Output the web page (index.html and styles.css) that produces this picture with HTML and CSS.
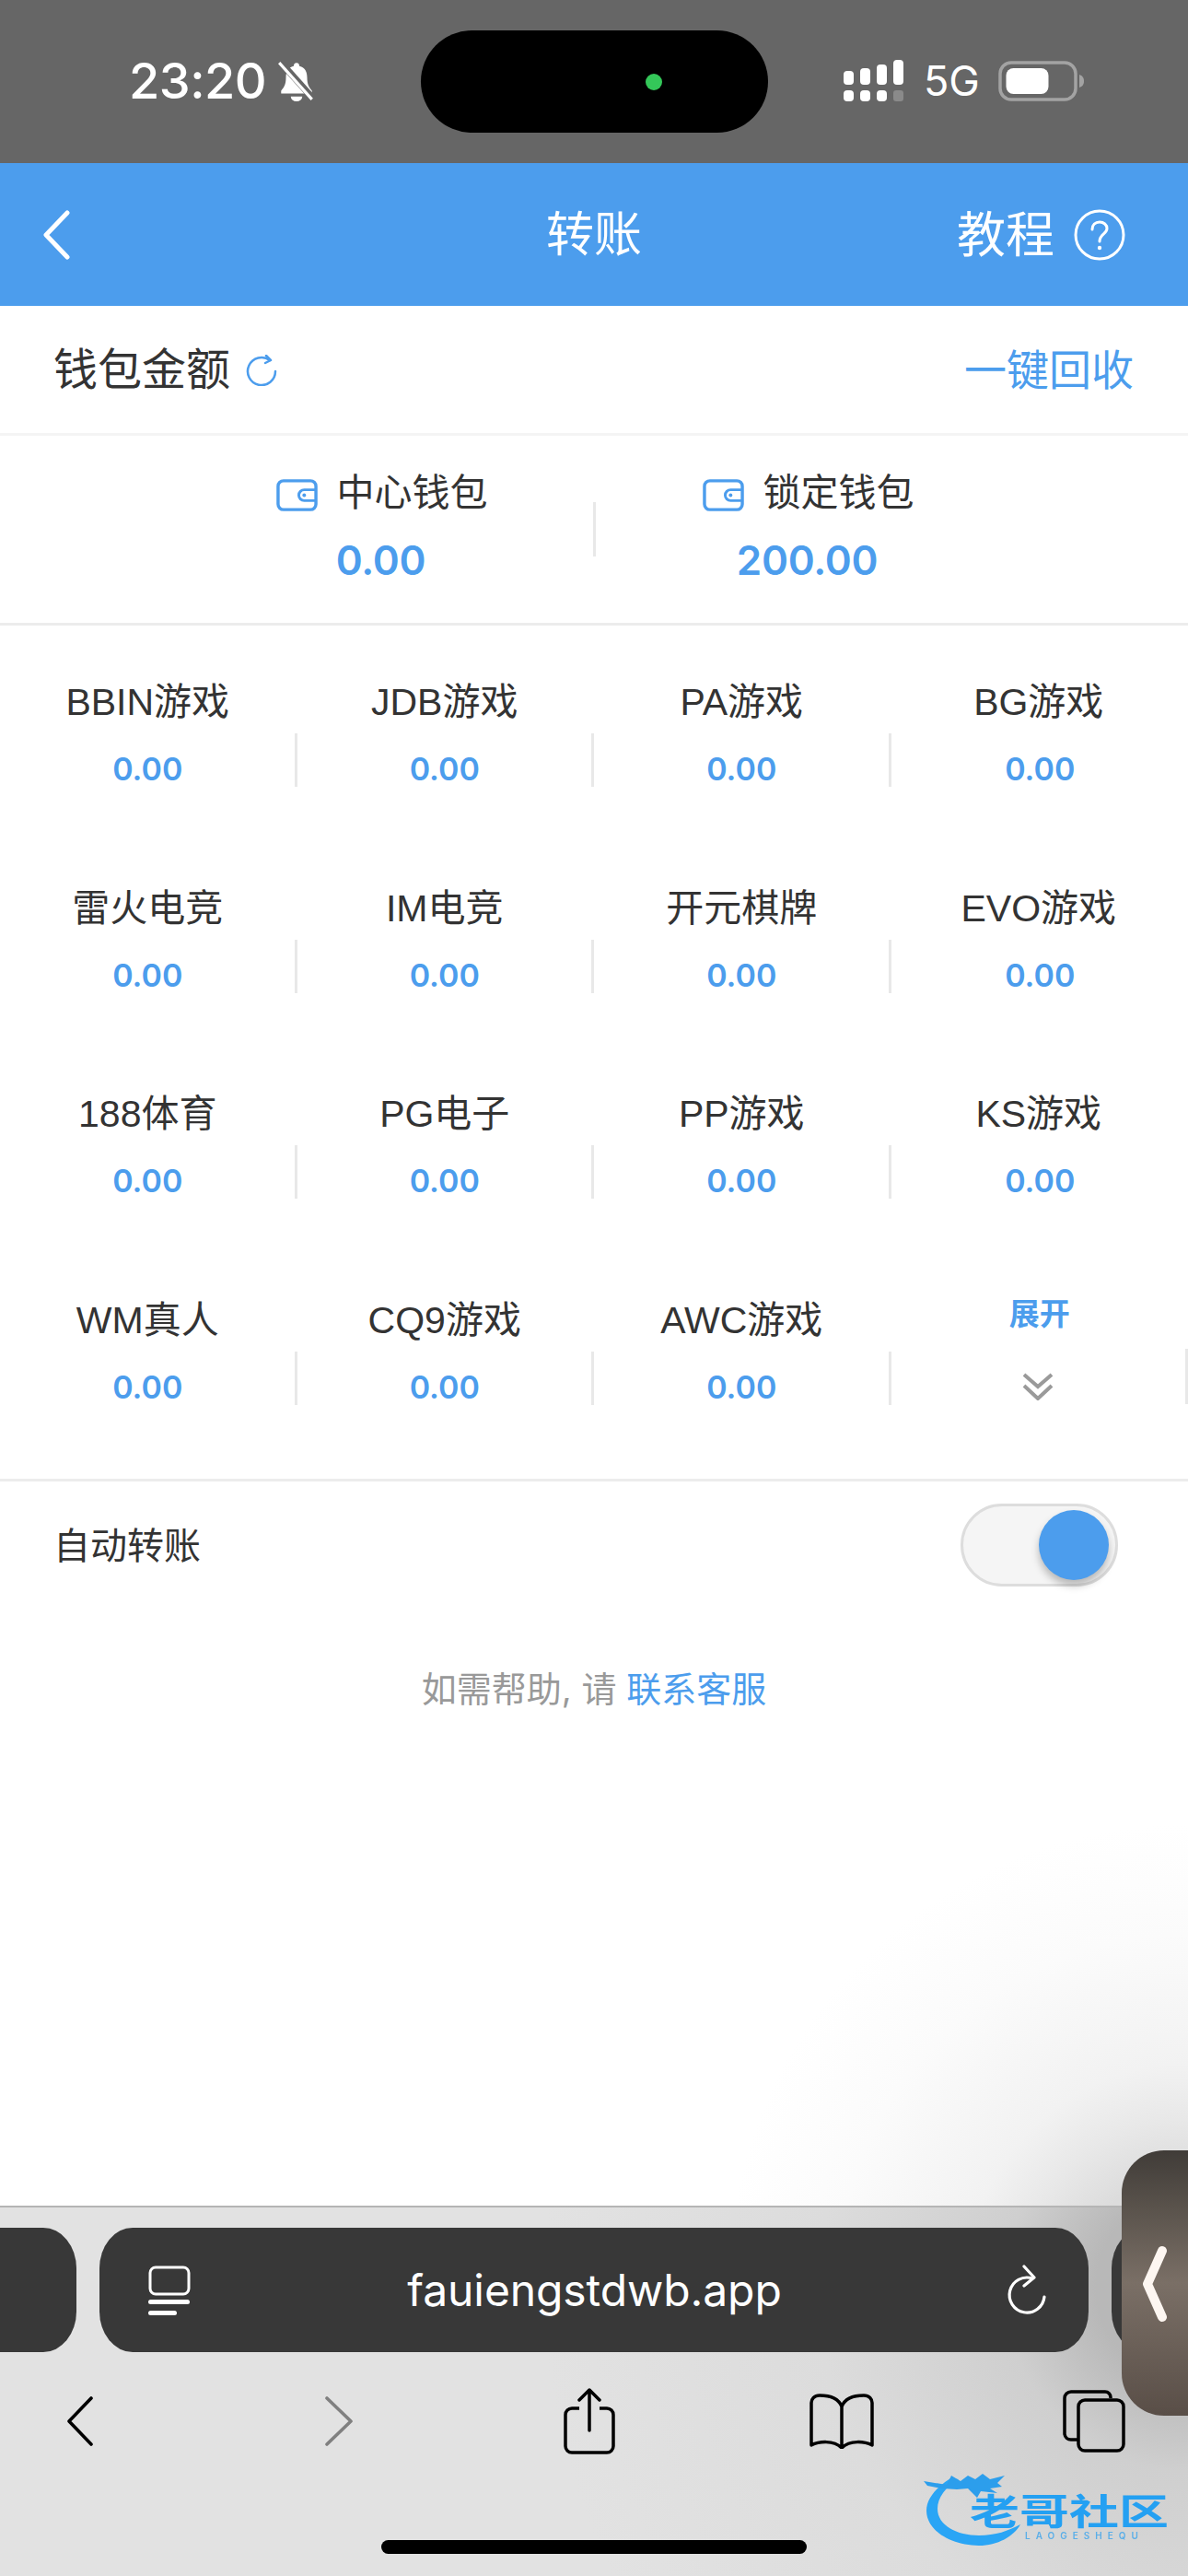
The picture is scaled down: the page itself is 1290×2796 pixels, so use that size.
FILE: index.html
```html
<!DOCTYPE html>
<html lang="zh-CN">
<head>
<meta charset="utf-8">
<title>转账</title>
<link rel="stylesheet" href="styles.css">
</head>
<body>
<div class="screen">
  <header class="status">
    <div class="status-left">
      <span class="clock">23:20</span>
      <svg class="bell" viewBox="0 0 44 44"><path d="M22 3c2 0 3 1.500 3 3.500 6 1.500 8 6 8 12 0 7 2 10 5 13.500v3H6v-3c3-3.500 5-6.500 5-13.500 0-6 2-10.500 8-12C19 4.500 20 3 22 3z" fill="#fff"/><path d="M16 38a6 5 0 0 0 12 0z" fill="#fff"/><path d="M6 3l34 38" stroke="#666" stroke-width="7"/><path d="M4 3l34 38" stroke="#fff" stroke-width="3"/></svg>
    </div>
    <div class="island"><span class="cam"></span></div>
    <div class="status-right">
      <svg class="signal" viewBox="0 0 66 46"><g fill="#fff"><rect x="0" y="12" width="11" height="15" rx="4"/><rect x="18" y="9" width="11" height="18" rx="4"/><rect x="36" y="5" width="11" height="22" rx="4"/><rect x="54" y="0" width="11" height="27" rx="4"/><rect x="0" y="33" width="11" height="12" rx="4"/><rect x="18" y="33" width="11" height="12" rx="4"/><rect x="36" y="33" width="11" height="12" rx="4"/></g><rect x="54" y="33" width="11" height="12" rx="3" fill="#8a8a8a"/></svg>
      <span class="net">5G</span>
      <svg class="battery" viewBox="0 0 94 44"><rect x="2" y="2" width="82" height="40" rx="12" fill="none" stroke="#a3a3a3" stroke-width="3.500"/><rect x="8.500" y="8" width="46" height="28" rx="8" fill="#fff"/><path d="M88 15c3 1 5 3 5 7s-2 6-5 7z" fill="#a3a3a3"/></svg>
    </div>
  </header>

  <nav class="nav">
    <svg class="nav-back" viewBox="0 0 32 54"><path d="M28 3L5 27l23 24" fill="none" stroke="#fff" stroke-width="5" stroke-linecap="round" stroke-linejoin="round"/></svg>
    <h1 class="nav-title">转账</h1>
    <div class="nav-help">
      <span>教程</span>
      <svg class="help-icon" viewBox="0 0 56 56"><circle cx="28" cy="28" r="26" fill="none" stroke="#fff" stroke-width="3"/><path d="M20 22c0-5 3.500-8 8-8s8 3 8 7c0 6-8 6-8 14" fill="none" stroke="#fff" stroke-width="3" stroke-linecap="round"/><circle cx="28" cy="42" r="2.200" fill="#fff"/></svg>
    </div>
  </nav>

  <section class="wallet-head">
    <div class="wallet-title">
      <span>钱包金额</span>
      <svg class="refresh" viewBox="0 0 36 34"><path d="M27 6A15 15 0 1 0 33 18" fill="none" stroke="#4c9ded" stroke-width="2.500" stroke-linecap="round"/><path d="M23 1l5 5-6 3" fill="none" stroke="#4c9ded" stroke-width="2.500" stroke-linecap="round" stroke-linejoin="round"/></svg>
    </div>
    <span class="recycle">一键回收</span>
  </section>

  <section class="cards">
    <div class="card">
      <div class="card-label">
        <svg class="wallet-icon" viewBox="0 0 46 36"><rect x="2" y="2" width="42" height="32" rx="6" fill="none" stroke="#4c9ded" stroke-width="3.500"/><path d="M44 12H31a6 6 0 0 0 0 12h13" fill="none" stroke="#4c9ded" stroke-width="3"/><circle cx="31" cy="18" r="2" fill="#4c9ded"/></svg>
        <span>中心钱包</span>
      </div>
      <div class="card-value">0.00</div>
    </div>
    <span class="card-rule"></span>
    <div class="card">
      <div class="card-label">
        <svg class="wallet-icon" viewBox="0 0 46 36"><rect x="2" y="2" width="42" height="32" rx="6" fill="none" stroke="#4c9ded" stroke-width="3.500"/><path d="M44 12H31a6 6 0 0 0 0 12h13" fill="none" stroke="#4c9ded" stroke-width="3"/><circle cx="31" cy="18" r="2" fill="#4c9ded"/></svg>
        <span>锁定钱包</span>
      </div>
      <div class="card-value">200.00</div>
    </div>
  </section>

  <section class="games">
    <div class="game"><div class="game-name">BBIN游戏</div><div class="game-val">0.00</div></div>
    <div class="game"><div class="game-name">JDB游戏</div><div class="game-val">0.00</div></div>
    <div class="game"><div class="game-name">PA游戏</div><div class="game-val">0.00</div></div>
    <div class="game"><div class="game-name">BG游戏</div><div class="game-val no-rule">0.00</div></div>
    <div class="game"><div class="game-name">雷火电竞</div><div class="game-val">0.00</div></div>
    <div class="game"><div class="game-name">IM电竞</div><div class="game-val">0.00</div></div>
    <div class="game"><div class="game-name">开元棋牌</div><div class="game-val">0.00</div></div>
    <div class="game"><div class="game-name">EVO游戏</div><div class="game-val no-rule">0.00</div></div>
    <div class="game"><div class="game-name">188体育</div><div class="game-val">0.00</div></div>
    <div class="game"><div class="game-name">PG电子</div><div class="game-val">0.00</div></div>
    <div class="game"><div class="game-name">PP游戏</div><div class="game-val">0.00</div></div>
    <div class="game"><div class="game-name">KS游戏</div><div class="game-val no-rule">0.00</div></div>
    <div class="game"><div class="game-name">WM真人</div><div class="game-val">0.00</div></div>
    <div class="game"><div class="game-name">CQ9游戏</div><div class="game-val">0.00</div></div>
    <div class="game"><div class="game-name">AWC游戏</div><div class="game-val">0.00</div></div>
    <div class="game">
      <div class="expand-label">展开</div>
      <div class="expand-icon">
        <svg class="chevrons" viewBox="0 0 34 30"><path d="M2 2l15 13L32 2M2 14l15 14 15-14" fill="none" stroke="#9a9a9a" stroke-width="4"/></svg>
      </div>
    </div>
  </section>

  <section class="auto">
    <span class="auto-label">自动转账</span>
    <span class="toggle"><span class="knob"></span></span>
  </section>

  <p class="help">如需帮助, 请 <a class="help-link">联系客服</a></p>

  <div class="page-fill"></div>

  <footer class="safari">
    <div class="tabs-row">
      <span class="tab-prev"></span>
      <div class="url">
        <svg class="reader" viewBox="0 0 46 54"><rect x="2" y="2" width="42" height="29" rx="6" fill="none" stroke="#fff" stroke-width="3"/><rect x="0" y="37" width="45" height="5" rx="2.500" fill="#fff"/><rect x="0" y="49" width="31" height="5" rx="2.500" fill="#fff"/></svg>
        <span class="url-text">fauiengstdwb.app</span>
        <svg class="reload" viewBox="0 0 46 56"><path d="M29 14A19 19 0 1 0 42 34" fill="none" stroke="#fff" stroke-width="3.200" stroke-linecap="round" transform="translate(0 1)"/><path d="M20 2l11 12-11 9" fill="none" stroke="#fff" stroke-width="3.200" stroke-linecap="round" stroke-linejoin="round"/></svg>
      </div>
      <span class="tab-next"></span>
    </div>
    <div class="tools">
      <svg class="tool tool-back" viewBox="0 0 30 54"><path d="M27 2L3 27l24 25" fill="none" stroke="#000" stroke-width="3.600" stroke-linecap="round" stroke-linejoin="round"/></svg>
      <svg class="tool tool-fwd" viewBox="0 0 32 54"><path d="M3 2l26 25L3 52" fill="none" stroke="#808080" stroke-width="3.600" stroke-linecap="round" stroke-linejoin="round"/></svg>
      <svg class="tool tool-share" viewBox="0 0 56 72"><path d="M17 22H9a7 7 0 0 0-7 7v34a7 7 0 0 0 7 7h38a7 7 0 0 0 7-7V29a7 7 0 0 0-7-7h-8" fill="none" stroke="#000" stroke-width="3.500"/><path d="M28 46V2M17 13L28 2l11 11" fill="none" stroke="#000" stroke-width="3.500" stroke-linecap="round" stroke-linejoin="round"/></svg>
      <svg class="tool tool-book" viewBox="0 0 72 60"><path d="M36 14C32 4 22 2 12 2 6 2 3 6 3 10v46c8-4 24-6 33 3 9-9 25-7 33-3V10c0-4-3-8-9-8-10 0-20 2-24 12zM36 14v45" fill="none" stroke="#000" stroke-width="3.500" stroke-linejoin="round"/></svg>
      <svg class="tool tool-tabs" viewBox="0 0 68 68"><path d="M52 9V8a6 6 0 0 0-6-6H9A7 7 0 0 0 2 9v39a7 7 0 0 0 7 6h7" fill="none" stroke="#000" stroke-width="3.500"/><rect x="17" y="11" width="49" height="55" rx="7" fill="none" stroke="#000" stroke-width="3.500"/></svg>
    </div>
    <div class="home"></div>
  </footer>

  <aside class="float-tab">
    <svg class="float-chevron" viewBox="0 0 28 84"><path d="M22 6L6 42l16 36" fill="none" stroke="#fdf6f1" stroke-width="10" stroke-linecap="round" stroke-linejoin="round"/></svg>
  </aside>

  <div class="watermark">
    <svg class="wm-swoosh" viewBox="0 0 270 92"><path d="M29 15C12 26 3 38 3 50c0 22 27 38 57 38 20 0 38-10 45-23-13 7-27 12-45 12C36 77 15 66 15 48c0-12 9-24 23-32z" fill="#2aa5f5"/><path d="M0 18l25 4 5-10 10 6 8-6 8 4 8-6 8 6 16-4-8 8 5 4-13 2 8 5-18-2-4 7-10-10-12 1-16-1-16-3z" fill="#2c9eec"/></svg>
    <span class="wm-name">老哥社区</span>
    <span class="wm-sub">LAOGESHEQU</span>
  </div>
</div>
</body>
</html>
```

FILE: styles.css
```css
* { box-sizing: border-box; margin: 0; padding: 0; }
html, body { width: 1290px; height: 2796px; overflow: hidden; background: #fff; }
body { font-family: Inter, "Noto Sans CJK SC", "Liberation Sans", sans-serif; color: #333; }
svg { display: block; flex: none; }
.screen { position: relative; width: 1290px; height: 2796px; overflow: hidden; display: flex; flex-direction: column; }

.status { height: 177px; background: #666; display: flex; align-items: flex-start; padding-left: 140px; flex: none; }
.status-left { width: 317px; height: 144px; display: flex; align-items: center; gap: 10px; padding-top: 32px; }
.clock { font-size: 54px; line-height: 60px; font-weight: 500; color: #fff; letter-spacing: -0.5px; }
.bell { width: 46px; height: 46px; }
.island { width: 377px; height: 111px; margin-top: 33px; background: #000; border-radius: 56px; display: flex; align-items: center; padding-left: 244px; }
.cam { width: 18px; height: 18px; border-radius: 50%; background: #34c759; }
.status-right { display: flex; align-items: center; margin-left: 82px; margin-top: 63px; }
.signal { width: 66px; height: 46px; }
.net { font-size: 45px; line-height: 50px; color: #fff; margin-left: 21px; font-weight: 400; }
.battery { width: 94px; height: 44px; margin-left: 20px; }

.nav { height: 155px; background: #4c9ded; display: grid; grid-template-columns: minmax(0, 1fr) auto minmax(0, 1fr); align-items: center; padding: 0 45px; flex: none; color: #fff; }
.nav-back { width: 32px; height: 54px; }
.nav-title { font-size: 52px; line-height: 60px; font-weight: 400; }
.nav-help { justify-self: end; display: flex; align-items: center; gap: 21px; font-size: 53px; line-height: 60px; margin-right: 23px; }
.help-icon { width: 56px; height: 56px; }

.wallet-head { height: 141px; border-bottom: 3px solid #f4f4f4; display: flex; align-items: center; justify-content: space-between; padding: 0 59px 0 58px; flex: none; }
.wallet-title { display: flex; align-items: center; gap: 16px; font-size: 48px; line-height: 60px; color: #333; }
.refresh { width: 36px; height: 34px; margin-top: 2px; }
.recycle { font-size: 46px; line-height: 60px; color: #4c9ded; }

.cards { height: 206px; border-bottom: 3px solid #ececec; display: flex; justify-content: center; align-items: center; flex: none; }
.card { width: 460px; display: flex; flex-direction: column; align-items: center; padding-bottom: 7px; }
.card-label { display: flex; align-items: center; gap: 21px; font-size: 41px; line-height: 50px; color: #333; padding-left: 2px; }
.wallet-icon { width: 45px; height: 37px; margin-top: 7px; }
.card-value { font-size: 44px; line-height: 50px; font-weight: 600; color: #4c9ded; margin-top: 24px; letter-spacing: -0.3px; }
.card-rule { width: 3px; height: 59px; background: #e8e8e8; }

.games { height: 929px; display: grid; grid-template-columns: repeat(4, 322.5px); grid-auto-rows: 223.67px; padding-top: 58px; flex: none; border-bottom: 3px solid #ececec; }
.game { display: flex; flex-direction: column; }
.game-name { height: 59px; padding-right: 2px; font-family: "Liberation Sans", "Noto Sans CJK SC", sans-serif; font-size: 41px; line-height: 50px; text-align: center; color: #333; }
.game-val { height: 58px; font-size: 34px; line-height: 78px; font-weight: 600; text-align: center; color: #4c9ded; border-right: 3px solid #e8e8e8; padding-left: 1px; }
.game-val.no-rule { border-right: 0; }
.expand-label { height: 63px; margin-top: -7px; font-size: 33px; line-height: 50px; text-align: center; color: #4c9ded; font-weight: 700; }
.expand-icon { height: 60px; display: flex; justify-content: center; border-right: 3px solid #e8e8e8; }
.chevrons { width: 34px; height: 30px; margin-top: 26px; }

.auto { height: 162px; display: flex; align-items: flex-start; justify-content: space-between; padding: 24px 76px 0 58px; flex: none; }
.auto-label { font-size: 40px; line-height: 50px; color: #333; margin-top: 21px; }
.toggle { width: 171px; height: 90px; border-radius: 45px; background: #f5f5f5; border: 3px solid #ddd; display: flex; align-items: center; justify-content: flex-end; padding-right: 7px; }
.knob { width: 76px; height: 76px; border-radius: 50%; background: #4c9ded; box-shadow: 0 6px 8px rgba(0,0,0,.25); }

.help { text-align: center; font-size: 38px; line-height: 50px; color: #999; margin-top: 38px; flex: none; }
.help-link { color: #4c9ded; }

.page-fill { flex: 1; background: radial-gradient(circle 500px at 100% calc(100% + 86px), #dcdcdc 120px, #e8e8e8 180px, #f2f2f2 240px, #fbfbfb 380px, #fff 500px); }

.safari { height: 402px; flex: none; border-top: 2px solid #b5b5b5; background: radial-gradient(circle 700px at 100% 86px, #b8b8b8 100px, #cfcfcf 200px, #dcdcdc 400px, #e2e2e2 700px); display: flex; flex-direction: column; }
.tabs-row { height: 135px; margin-top: 22px; display: flex; flex: none; }
.tab-prev { width: 83px; background: #383838; border-radius: 0 36px 36px 0 / 0 44px 44px 0; flex: none; }
.url { width: 1074px; margin-left: 25px; background: #383838; border-radius: 36px / 44px; display: grid; grid-template-columns: minmax(0, 1fr) auto minmax(0, 1fr); align-items: center; padding: 0 44px 0 53px; color: #fff; flex: none; }
.reader { width: 46px; height: 54px; }
.url-text { font-size: 48px; line-height: 60px; letter-spacing: -0.1px; color: #fff; transform: translateX(-4px); }
.reload { width: 46px; height: 56px; justify-self: end; }
.tab-next { width: 90px; margin-left: 25px; background: #383838; border-radius: 36px 0 0 36px / 44px 0 0 44px; flex: none; }
.tools { height: 100px; margin-top: 25px; display: flex; align-items: center; padding-left: 72px; flex: none; }
.tool-back { width: 30px; height: 54px; }
.tool-fwd { width: 32px; height: 54px; margin-left: 250px; }
.tool-share { width: 56px; height: 72px; margin-left: 228px; }
.tool-book { width: 72px; height: 60px; margin-left: 210px; }
.tool-tabs { width: 68px; height: 68px; margin-left: 204px; }
.home { width: 462px; height: 15px; background: #000; border-radius: 8px; margin: 79px 0 0 414px; flex: none; }

.float-tab { position: absolute; left: 1218px; top: 2334px; width: 72px; height: 288px; border-radius: 46px 0 0 46px; background: linear-gradient(180deg, #403c38 0%, #5a534c 22%, #7a6f66 50%, #6a5f57 75%, #594e47 100%); display: flex; align-items: center; padding-left: 22px; }
.float-chevron { width: 28px; height: 84px; margin-top: 2px; }

.watermark { position: absolute; left: 1003px; top: 2675px; width: 270px; height: 92px; filter: blur(.7px); }
.wm-swoosh { position: absolute; left: 0; top: 0; width: 270px; height: 92px; }
.wm-name { position: absolute; left: 50px; top: 33px; height: 36px; font-size: 54px; line-height: 36px; font-weight: 700; color: #24a0f2; white-space: nowrap; transform: scaleY(.72); }
.wm-sub { position: absolute; left: 110px; top: 71px; font-size: 10px; line-height: 12px; font-weight: 600; color: #5aaee8; letter-spacing: 6px; white-space: nowrap; }
```
